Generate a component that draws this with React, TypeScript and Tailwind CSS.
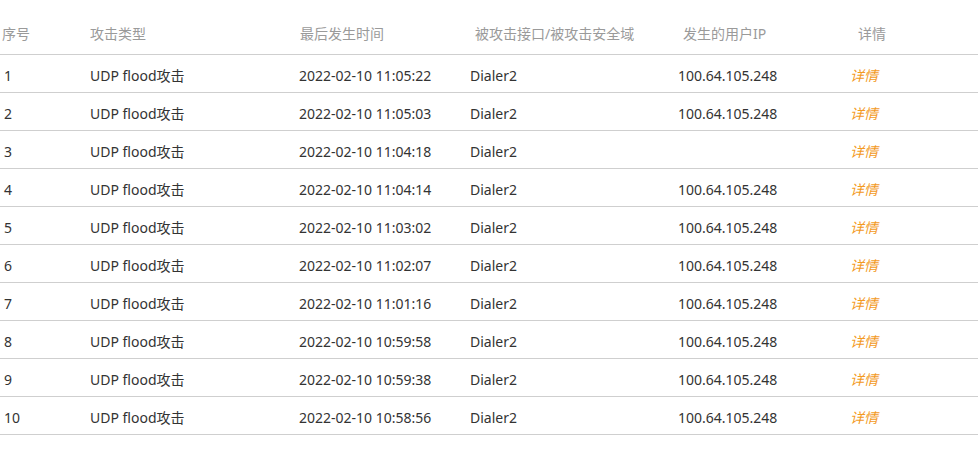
const rows = [
  { id: 1, time: '2022-02-10 11:05:22', ip: '100.64.105.248' },
  { id: 2, time: '2022-02-10 11:05:03', ip: '100.64.105.248' },
  { id: 3, time: '2022-02-10 11:04:18', ip: '' },
  { id: 4, time: '2022-02-10 11:04:14', ip: '100.64.105.248' },
  { id: 5, time: '2022-02-10 11:03:02', ip: '100.64.105.248' },
  { id: 6, time: '2022-02-10 11:02:07', ip: '100.64.105.248' },
  { id: 7, time: '2022-02-10 11:01:16', ip: '100.64.105.248' },
  { id: 8, time: '2022-02-10 10:59:58', ip: '100.64.105.248' },
  { id: 9, time: '2022-02-10 10:59:38', ip: '100.64.105.248' },
  { id: 10, time: '2022-02-10 10:58:56', ip: '100.64.105.248' },
];

const grid = 'grid grid-cols-[86px_209px_171px_208px_172px_1fr]';

export default function App() {
  return (
    <div
      className="w-[978px] h-[460px] bg-white text-[14px] leading-[20px] overflow-hidden"
      style={{ fontFamily: '"Noto Sans", "Noto Sans CJK SC", sans-serif' }}
    >
      {/* header */}
      <div className={`${grid} h-[55px] pt-[14px] items-center border-b border-[#cfcfcf] text-[#9a9a9a]`}>
        <div className="pl-[2px]">序号</div>
        <div className="pl-[4px]">攻击类型</div>
        <div className="pl-[5px]">最后发生时间</div>
        <div className="pl-[9px]">被攻击接口/被攻击安全域</div>
        <div className="pl-[9px]">发生的用户IP</div>
        <div className="pl-[12px]">详情</div>
      </div>

      {rows.map((r) => (
        <div key={r.id} className={`${grid} h-[38px] pt-[4px] items-center border-b border-[#cfcfcf] text-[#333]`}>
          <div className="pl-[4px]">{r.id}</div>
          <div className="pl-[4px]">UDP flood攻击</div>
          <div className="pl-[4px]">{r.time}</div>
          <div className="pl-[4px]">Dialer2</div>
          <div className="pl-[4px]">{r.ip}</div>
          <div className="pl-[4px]">
            <a className="italic text-[#f39a1e] cursor-pointer">详情</a>
          </div>
        </div>
      ))}
    </div>
  );
}
